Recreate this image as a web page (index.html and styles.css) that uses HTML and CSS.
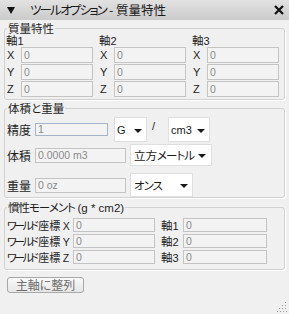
FILE: index.html
```
<!DOCTYPE html>
<html lang="ja">
<head>
<meta charset="utf-8">
<title>ツールオプション - 質量特性</title>
<link rel="stylesheet" href="styles.css">
</head>
<body>
<div class="titlebar">
  <svg class="tri" width="8" height="7" viewBox="0 0 8 7"><polygon points="0,0 8,0 4,7" fill="#111"/></svg>
  <span class="title"><span class="tkana">ツールオプション</span> - 質量特性</span>
  <svg class="close" width="10" height="10" viewBox="0 0 10 10"><path d="M1 1 L9 9 M9 1 L1 9" stroke="#111" stroke-width="2.2" fill="none"/></svg>
</div>

<fieldset class="grp g1">
  <legend>質量特性</legend>
  <div class="axes">
    <div class="axis">
      <div class="axis-head">軸<span class="num">1</span></div>
      <div class="arow"><span class="xl">X</span><div class="field fa">0</div></div>
      <div class="arow"><span class="xl">Y</span><div class="field fa">0</div></div>
      <div class="arow"><span class="xl">Z</span><div class="field fa">0</div></div>
    </div>
    <div class="axis">
      <div class="axis-head">軸<span class="num">2</span></div>
      <div class="arow"><span class="xl">X</span><div class="field fa">0</div></div>
      <div class="arow"><span class="xl">Y</span><div class="field fa">0</div></div>
      <div class="arow"><span class="xl">Z</span><div class="field fa">0</div></div>
    </div>
    <div class="axis">
      <div class="axis-head">軸<span class="num">3</span></div>
      <div class="arow"><span class="xl">X</span><div class="field fa">0</div></div>
      <div class="arow"><span class="xl">Y</span><div class="field fa">0</div></div>
      <div class="arow"><span class="xl">Z</span><div class="field fa">0</div></div>
    </div>
  </div>
</fieldset>

<fieldset class="grp g2">
  <legend>体積と重量</legend>
  <div class="vrow r1">
    <span class="vlbl">精度</span>
    <div class="field fprec">1</div>
    <div class="combo cg"><span class="lat">G</span><span class="arr"></span></div>
    <span class="slash">/</span>
    <div class="combo ccm"><span class="lat">cm3</span><span class="arr"></span></div>
  </div>
  <div class="vrow r2">
    <span class="vlbl">体積</span>
    <div class="field fvol">0.0000 m3</div>
    <div class="combo cvol"><span class="ctext">立方<span class="ckana">メートル</span></span><span class="arr"></span></div>
  </div>
  <div class="vrow r3">
    <span class="vlbl">重量</span>
    <div class="field fvol">0 oz</div>
    <div class="combo cwt"><span class="ctext ckana">オンス</span><span class="arr"></span></div>
  </div>
</fieldset>

<fieldset class="grp g3">
  <legend><span class="lkana">慣性モーメント</span> <span class="lat">(g * cm2)</span></legend>
  <div class="mrow first">
    <span class="mlbl"><span class="kana">ワールド</span>座標 <span class="lat">X</span></span>
    <div class="field fm1">0</div>
    <span class="alb">軸<span class="num">1</span></span>
    <div class="field fm2">0</div>
  </div>
  <div class="mrow">
    <span class="mlbl"><span class="kana">ワールド</span>座標 <span class="lat">Y</span></span>
    <div class="field fm1">0</div>
    <span class="alb">軸<span class="num">2</span></span>
    <div class="field fm2">0</div>
  </div>
  <div class="mrow">
    <span class="mlbl"><span class="kana">ワールド</span>座標 <span class="lat">Z</span></span>
    <div class="field fm1">0</div>
    <span class="alb">軸<span class="num">3</span></span>
    <div class="field fm2">0</div>
  </div>
</fieldset>

<div class="btn">主軸に整列</div>

<svg class="grip" width="10" height="10" viewBox="0 0 10 10">
  <rect x="8" y="0" width="1" height="1" fill="#9a9a9a"/>
  <rect x="5" y="3" width="1" height="1" fill="#9a9a9a"/>
  <rect x="8" y="3" width="1" height="1" fill="#9a9a9a"/>
  <rect x="2" y="6" width="1" height="1" fill="#9a9a9a"/>
  <rect x="5" y="6" width="1" height="1" fill="#9a9a9a"/>
  <rect x="8" y="6" width="1" height="1" fill="#9a9a9a"/>
  <rect x="0" y="9" width="1" height="1" fill="#9a9a9a"/>
  <rect x="3" y="9" width="1" height="1" fill="#9a9a9a"/>
  <rect x="6" y="9" width="1" height="1" fill="#9a9a9a"/>
  <rect x="9" y="9" width="1" height="1" fill="#9a9a9a"/>
</svg>
</body>
</html>
```

FILE: styles.css
```
* { box-sizing: border-box; }

body {
  margin: 0;
  width: 289px;
  height: 314px;
  background: #f0f0f0;
  font-family: "Noto Sans CJK JP", "Liberation Sans", sans-serif;
  font-size: 12px;
  color: #1e1e1e;
  font-feature-settings: "palt";
  position: relative;
  overflow: hidden;
}

.lat, .num, .xl, .field {
  font-family: "Liberation Sans", "Noto Sans CJK JP", sans-serif;
}

.titlebar {
  height: 20px;
  display: flex;
  align-items: center;
  padding-left: 7px;
  background: linear-gradient(#e2e2e2, #cbcbcb);
}
.tri { flex: none; margin-right: 15px; }
.title {
  flex: 1;
  font-size: 12.5px;
  line-height: 20px;
  color: #1a1a1a;
  white-space: nowrap;
}
.tkana { letter-spacing: -1.8px; }
.close { flex: none; margin-right: 5px; }

.grp {
  margin: 0 4px;
  padding: 0 0 2px 1px;
  min-width: 0;
  border: 1px solid #d2d2d2;
  border-radius: 3px;
  box-shadow: 1px 1px 0 #ffffff;
}
.grp legend {
  padding: 0 1px;
  margin-left: 1px;
  line-height: 10px;
  font-size: 11.5px;
  color: #1e1e1e;
  white-space: nowrap;
}
.lkana { letter-spacing: -1px; }
.g1 { margin-top: 3px; }
.g2 { margin-top: 3px; padding-bottom: 0; }
.g3 { margin-top: 4px; padding-bottom: 4px; }

.axes {
  display: grid;
  grid-template-columns: 93px 93px 93px;
  margin-top: 1px;
}
.axis-head {
  height: 12px;
  line-height: 12px;
  font-size: 11.5px;
}
.num { font-size: 11px; }
.arow {
  display: flex;
  align-items: center;
  height: 17px;
}
.xl {
  width: 15px;
  padding-left: 1px;
  font-size: 11px;
  color: #222;
}

.field {
  height: 16px;
  border: 1px solid #c4c4c4;
  background: #f3f3f3;
  color: #8a8a8a;
  font-size: 10.5px;
  line-height: 14px;
  padding-left: 2px;
  white-space: nowrap;
  overflow: hidden;
  flex: none;
}
.fa { width: 72px; }

.vrow {
  display: flex;
  align-items: center;
}
.r1 { margin-top: 4px; height: 25px; }
.r2 { margin-top: 2px; height: 22px; }
.r3 { margin-top: 7px; height: 24px; }
.vlbl { width: 28px; margin-left: 1px; flex: none; }
.fprec {
  width: 73px;
  height: 13px;
  line-height: 11px;
  border-color: #a6b4c8;
}
.fvol { width: 91px; height: 15px; line-height: 13px; }

.combo {
  flex: none;
  align-self: stretch;
  display: flex;
  align-items: center;
  justify-content: space-between;
  background: #ffffff;
  border: 1px solid #e0e0e0;
  padding: 0 4px 0 3px;
  color: #1a1a1a;
  white-space: nowrap;
}
.combo .lat { font-size: 11px; }
.ctext { font-size: 11.5px; }
.ckana { letter-spacing: -1px; }
.cg { width: 33px; margin-left: 6px; padding-left: 2px; }
.ccm { width: 42px; padding-left: 2px; }
.cvol { width: 82px; margin-left: 4px; padding-right: 5px; }
.cwt { width: 63px; margin-left: 4px; }
.arr {
  flex: none;
  width: 0;
  height: 0;
  border-left: 4px solid transparent;
  border-right: 4px solid transparent;
  border-top: 4px solid #1a1a1a;
  margin-top: 2px;
}
.slash {
  width: 21px;
  padding-left: 5px;
  align-self: flex-start;
  margin-top: 3px;
  font-family: "Liberation Sans", sans-serif;
  font-size: 11px;
}

.mrow {
  display: flex;
  align-items: center;
  height: 16px;
}
.mrow.first { margin-top: 4px; }
.mlbl {
  width: 66px;
  margin-left: 1px;
  font-size: 11px;
  white-space: nowrap;
  flex: none;
  overflow: hidden;
}
.kana { letter-spacing: -2.6px; margin-right: 2px; }
.mlbl .lat { font-size: 10.5px; }
.fm1 { width: 82px; height: 14px; line-height: 12px; }
.alb { width: 22px; margin-left: 6px; flex: none; font-size: 11.5px; }
.fm2 { width: 84px; height: 14px; line-height: 12px; }

.btn {
  margin: 7px 0 0 7px;
  width: 77px;
  height: 16px;
  border: 1px solid #a8a8a8;
  border-radius: 3px;
  background: linear-gradient(#fafafa, #e6e6e6);
  color: #6e6e6e;
  font-size: 12px;
  line-height: 14px;
  text-align: center;
}

.grip {
  position: absolute;
  right: 2px;
  bottom: 2px;
}
```
